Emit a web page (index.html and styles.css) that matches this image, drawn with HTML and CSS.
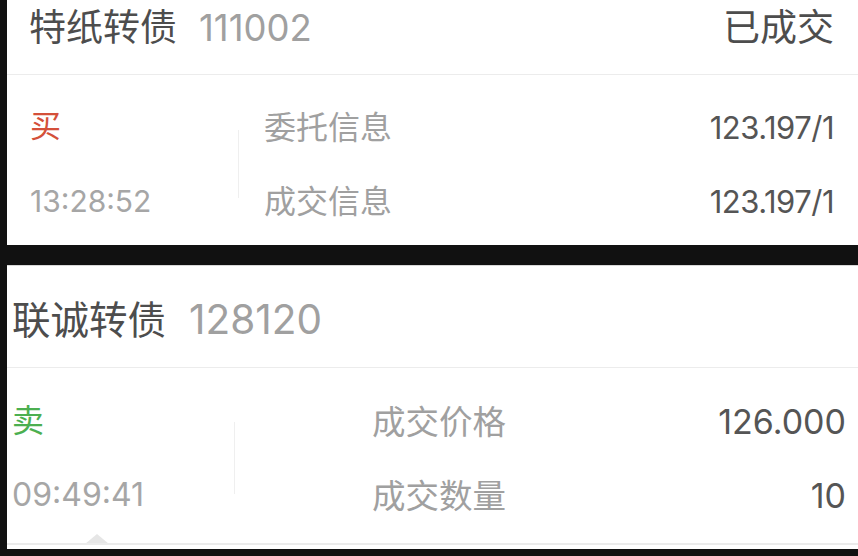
FILE: index.html
```html
<!DOCTYPE html>
<html lang="zh">
<head>
<meta charset="utf-8">
<link rel="stylesheet" href="styles.css">
</head>
<body>
<div class="page">
  <section class="card card-a">
    <header class="head">
      <div class="title"><span class="name">特纸转债</span><span class="code">111002</span></div>
      <div class="status">已成交</div>
    </header>
    <div class="body">
      <div class="side">
        <div class="dir buy">买</div>
        <div class="time">13:28:52</div>
      </div>
      <div class="sep"></div>
      <div class="info">
        <div class="row"><span class="label">委托信息</span><span class="value">123.197/1</span></div>
        <div class="row"><span class="label">成交信息</span><span class="value">123.197/1</span></div>
      </div>
    </div>
  </section>
  <section class="card card-b">
    <header class="head">
      <div class="title"><span class="name">联诚转债</span><span class="code">128120</span></div>
    </header>
    <div class="body">
      <div class="side">
        <div class="dir sell">卖</div>
        <div class="time">09:49:41</div>
      </div>
      <div class="sep"></div>
      <div class="info">
        <div class="row"><span class="label">成交价格</span><span class="value">126.000</span></div>
        <div class="row"><span class="label">成交数量</span><span class="value">10</span></div>
      </div>
    </div>
    <div class="tail"></div>
  </section>
</div>
</body>
</html>
```
FILE: styles.css
```css
html, body {
  margin: 0;
  padding: 0;
  background: #111111;
}
body {
  width: 858px;
  height: 556px;
  overflow: hidden;
  font-family: Inter, "Noto Sans CJK SC", sans-serif;
}
.page {
  display: flex;
  flex-direction: column;
  gap: 20px;
}
.card {
  margin-left: 7px;
  background: #ffffff;
  position: relative;
  box-sizing: border-box;
}
.head {
  display: flex;
  justify-content: space-between;
  align-items: center;
  border-bottom: 1px solid #ececec;
  box-sizing: border-box;
}
.title {
  display: flex;
  align-items: baseline;
}
.name {
  color: #4d4d4d;
}
.code {
  color: #a0a0a0;
}
.status {
  color: #4d4d4d;
}
.body {
  display: flex;
  align-items: center;
}
.side {
  display: flex;
  flex-direction: column;
}
.dir, .time, .row {
  display: flex;
  align-items: center;
}
.buy { color: #d4503a; }
.sell { color: #4caf50; }
.time { color: #a6a6a6; }
.sep {
  width: 1px;
  background: #efefef;
}
.info {
  flex: 1;
  display: flex;
  flex-direction: column;
}
.row {
  justify-content: space-between;
}
.label { color: #a0a0a0; }
.value { color: #555555; margin-top: 4px; }

/* card A */
.card-a {
  height: 245px;
}
.card-a .head {
  height: 75px;
  padding: 0 24px 0 22px;
  align-items: flex-start;
  padding-top: 6px;
}
.card-a .name, .card-a .status {
  font-size: 37px;
  line-height: 44px;
}
.card-a .code {
  font-size: 36.5px;
  line-height: 44px;
  margin-left: 22px;
}
.card-a .body {
  padding: 11px 24px 0 23px;
}
.card-a .side {
  width: 208px;
}
.card-a .dir, .card-a .time, .card-a .row {
  height: 74px;
}
.card-a .dir { font-size: 31px; }
.card-a .time { font-size: 30px; margin-top: 4px; }
.card-a .sep {
  height: 68px;
  margin-top: 4px;
}
.card-a .info {
  padding-left: 25px;
}
.card-a .label { font-size: 32px; }
.card-a .value { font-size: 31px; letter-spacing: -0.5px; }

/* card B */
.card-b {
  height: 284px;
  border-top: 1px solid #d8d8d8;
  border-bottom: 4px solid #ffffff;
}
.card-b::after {
  content: "";
  position: absolute;
  left: 0;
  right: 0;
  bottom: 0;
  height: 2px;
  background: #ebebeb;
}
.card-b .head {
  height: 102px;
  padding: 0 12px 0 5px;
  padding-top: 6px;
}
.card-b .name {
  font-size: 38.5px;
  line-height: 46px;
}
.card-b .code {
  font-size: 40.5px;
  line-height: 46px;
  margin-left: 23px;
}
.card-b .body {
  padding: 13px 12px 0 5px;
}
.card-b .side {
  width: 222px;
}
.card-b .dir, .card-b .time, .card-b .row {
  height: 74px;
}
.card-b .dir { font-size: 32px; }
.card-b .time { font-size: 32px; margin-top: 2px; }
.card-b .sep {
  height: 72px;
  margin-top: 4px;
}
.card-b .info {
  padding-left: 137px;
}
.card-b .label { font-size: 33.5px; }
.card-b .value { font-size: 34px; }
.tail {
  position: absolute;
  left: 78px;
  bottom: 1px;
  width: 0;
  height: 0;
  border-left: 12px solid transparent;
  border-right: 12px solid transparent;
  border-bottom: 10px solid #e6e6e6;
}
```
